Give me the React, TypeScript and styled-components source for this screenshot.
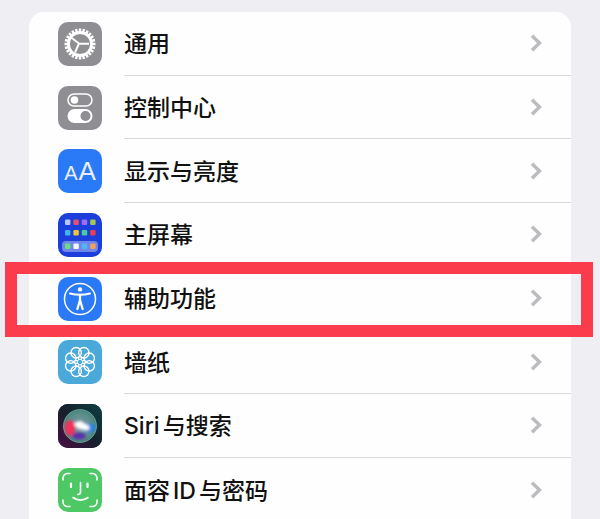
import React from "react";
import styled, { createGlobalStyle } from "styled-components";

const Global = createGlobalStyle`
  html, body {
    margin: 0;
    padding: 0;
    background: #eeeef3;
  }
`;

const Page = styled.div`
  position: relative;
  width: 600px;
  height: 519px;
  overflow: hidden;
  padding: 12px 29px 0;
  box-sizing: border-box;
  background: #eeeef3;
  font-family: Inter, "Noto Sans CJK SC", "Noto Sans", sans-serif;
`;

const Card = styled.div`
  background: #fefefe;
  border-radius: 15px 15px 0 0;
  padding-left: 29px;
`;

const Row = styled.div`
  display: flex;
  align-items: center;
  height: 63.7px;
  gap: 22px;
`;

const IconBox = styled.div<{ $bg: string }>`
  flex: none;
  width: 44px;
  height: 44px;
  border-radius: 10px;
  overflow: hidden;
  background: ${(p) => p.$bg};
  display: flex;
  align-items: center;
  justify-content: center;
  svg {
    display: block;
  }
`;

const RowBody = styled.div<{ $last?: boolean }>`
  flex: 1;
  align-self: stretch;
  display: flex;
  align-items: center;
  justify-content: space-between;
  padding-right: 29px;
  border-bottom: ${(p) => (p.$last ? "none" : "1px solid #d9d9dc")};
`;

const Label = styled.span`
  font-size: 23px;
  font-weight: 500;
  line-height: 1;
  color: #111;
  padding-top: 3px;
`;

const Latin = styled.span<{ $left?: number; $right?: number }>`
  margin-left: ${(p) => p.$left ?? 0}px;
  margin-right: ${(p) => p.$right ?? 0}px;
`;

const AaText = styled.span`
  font-family: "Liberation Sans", sans-serif;
  color: #e8f0ff;
  display: flex;
  align-items: baseline;
  gap: 1px;
  line-height: 1;
`;

const SmallA = styled.span`
  font-size: 20px;
`;

const BigA = styled.span`
  font-size: 26px;
`;

const Highlight = styled.div`
  position: absolute;
  left: 5px;
  top: 262px;
  width: 588px;
  height: 75px;
  box-sizing: border-box;
  border: 12px solid #fb3c4c;
  pointer-events: none;
`;

const Chevron = () => (
  <svg width="12" height="18" viewBox="0 0 12 18" fill="none">
    <path d="M2 1.800L9.500 9 2 16.200" stroke="#bcbcc0" strokeWidth="3.400" />
  </svg>
);

const GearIcon = () => {
  const teeth = Array.from({ length: 24 }, (_, i) => i * 15);
  return (
    <svg width="44" height="44" viewBox="0 0 44 44" fill="none" stroke="#fff">
      {teeth.map((deg) => (
        <line key={deg} x1="22" y1="6.500" x2="22" y2="11" strokeWidth="2.400" transform={`rotate(${deg} 22 22)`} />
      ))}
      <circle cx="22" cy="22" r="11.500" strokeWidth="2.800" />
      <path d="M21 21.500L31 21.800M21 21.500L12.500 15M21 21.500L17 30.500" strokeWidth="1.900" />
    </svg>
  );
};

const SwitchIcon = () => (
  <svg width="44" height="44" viewBox="0 0 44 44">
    <rect x="10" y="8" width="24" height="12" rx="6" fill="none" stroke="#fff" strokeWidth="1.600" />
    <circle cx="16.500" cy="14" r="3.800" fill="#fff" />
    <rect x="9.500" y="23" width="25" height="14" rx="7" fill="#fff" />
    <circle cx="27.500" cy="30" r="5" fill="#8e8e93" />
  </svg>
);

const homeDots = [
  ["#b9c6f5", "#e8506a", "#a06cf0", "#a4c850"],
  ["#3fb4f0", "#f2c230", "#45cf9a", "#e8404c"],
];
const dockDots = ["#6fdc7a", "#f4f6ff", "#4cb8f4", "#f2a05a"];

const HomeIcon = () => (
  <svg width="44" height="44" viewBox="0 0 44 44">
    {homeDots.map((line, r) =>
      line.map((c, i) => (
        <rect key={`${r}-${i}`} x={7 + i * 8.4} y={6.500 + r * 10.500} width="5.400" height="5.400" rx="1.200" fill={c} />
      ))
    )}
    <rect x="4" y="28" width="36" height="11" rx="4" fill="#8ca0ee" opacity="0.75" />
    {dockDots.map((c, i) => (
      <rect key={c} x={7 + i * 8.4} y="30.600" width="5.400" height="5.400" rx="1.200" fill={c} />
    ))}
  </svg>
);

const AccessIcon = () => (
  <svg width="44" height="44" viewBox="0 0 44 44" fill="none" stroke="#fff">
    <circle cx="22" cy="22" r="15.500" strokeWidth="1.500" />
    <circle cx="22" cy="12.400" r="2.200" fill="#fff" stroke="none" />
    <path d="M12 16.500C15.500 17.400 18.500 17.800 22 17.800s6.500-.4 10-1.300" strokeWidth="2" strokeLinecap="round" />
    <path d="M22 18v5.500M22 23l-2.600 9M22 23l2.600 9" strokeWidth="2.300" strokeLinecap="round" />
  </svg>
);

const FlowerIcon = () => {
  const petals = Array.from({ length: 8 }, (_, i) => i * 45 + 22.5);
  return (
    <svg width="44" height="44" viewBox="0 0 44 44" fill="none" stroke="#fff" strokeWidth="1.400">
      {petals.map((deg) => (
        <circle key={deg} cx="22" cy="12" r="5.200" transform={`rotate(${deg} 22 22)`} />
      ))}
      {petals.map((deg) => (
        <circle key={deg} cx="22" cy="17.800" r="1.700" strokeWidth="1" transform={`rotate(${deg + 22.5} 22 22)`} />
      ))}
    </svg>
  );
};

const SiriIcon = () => (
  <svg width="44" height="44" viewBox="0 0 44 44">
    <defs>
      <linearGradient id="siriBg" x1="0" y1="1" x2="1" y2="0">
        <stop offset="0" stopColor="#4a0f44" />
        <stop offset="0.5" stopColor="#15202c" />
        <stop offset="1" stopColor="#0e4044" />
      </linearGradient>
      <radialGradient id="siriOrb" cx="0.5" cy="0.5" r="0.5">
        <stop offset="0" stopColor="#7d8fa8" />
        <stop offset="0.7" stopColor="#5d8f8c" />
        <stop offset="1" stopColor="#45857a" />
      </radialGradient>
      <filter id="siriBlur">
        <feGaussianBlur stdDeviation="1.800" />
      </filter>
    </defs>
    <rect width="44" height="44" fill="url(#siriBg)" />
    <circle cx="22" cy="22" r="16.500" fill="url(#siriOrb)" />
    <g filter="url(#siriBlur)">
      <ellipse cx="12" cy="24" rx="5.500" ry="8" fill="#f0305c" />
      <ellipse cx="32" cy="24" rx="5.500" ry="4.500" fill="#2a7fe8" />
      <ellipse cx="21" cy="32" rx="7" ry="3.500" fill="#5a2fa8" />
      <ellipse cx="24" cy="22" rx="8" ry="3.500" fill="#fff" transform="rotate(20 24 22)" />
      <ellipse cx="22" cy="21" rx="3.500" ry="4" fill="#fff" />
    </g>
    <circle cx="22" cy="22" r="16.500" fill="none" stroke="#8fc5b5" strokeWidth="0.800" opacity="0.7" />
  </svg>
);

const FaceIcon = () => (
  <svg width="44" height="44" viewBox="0 0 44 44" fill="none" stroke="#fff" strokeWidth="1.600" strokeLinecap="round">
    <path d="M5 12V10a4.500 4.500 0 0 1 4.500-4.500H12M32 5.500h2.500A4.500 4.500 0 0 1 39 10v2M39 32v2a4.500 4.500 0 0 1-4.500 4.500H32M12 38.500H9.500A4.500 4.500 0 0 1 5 34v-2" />
    <path d="M13 15.500v3.500M29.500 15.500v3.500" strokeWidth="2.200" />
    <path d="M22.500 14.500v9.500c0 1.500-1 2.500-2.800 2.500" />
    <path d="M15 29.500c4.500 3.500 10.500 3.500 15 0" />
  </svg>
);

const rows = [
  { label: "通用", bg: "#8e8e93", icon: <GearIcon /> },
  { label: "控制中心", bg: "#8e8e93", icon: <SwitchIcon /> },
  {
    label: "显示与亮度",
    bg: "#2a79f6",
    icon: (
      <AaText>
        <SmallA>A</SmallA>
        <BigA>A</BigA>
      </AaText>
    ),
  },
  { label: "主屏幕", bg: "#1c3edb", icon: <HomeIcon /> },
  { label: "辅助功能", bg: "#2a79f6", icon: <AccessIcon /> },
  { label: "墙纸", bg: "#4ba9da", icon: <FlowerIcon /> },
  {
    label: (
      <>
        <Latin $right={3}>Siri</Latin>与搜索
      </>
    ),
    bg: "#111",
    icon: <SiriIcon />,
  },
  {
    label: (
      <>
        面容<Latin $left={3} $right={3}>ID</Latin>与密码
      </>
    ),
    bg: "#4dc864",
    icon: <FaceIcon />,
  },
];

export default function App() {
  return (
    <Page>
      <Global />
      <Card>
        {rows.map((row, i) => (
          <Row key={i}>
            <IconBox $bg={row.bg}>{row.icon}</IconBox>
            <RowBody $last={i === rows.length - 1}>
              <Label>{row.label}</Label>
              <Chevron />
            </RowBody>
          </Row>
        ))}
      </Card>
      <Highlight />
    </Page>
  );
}
